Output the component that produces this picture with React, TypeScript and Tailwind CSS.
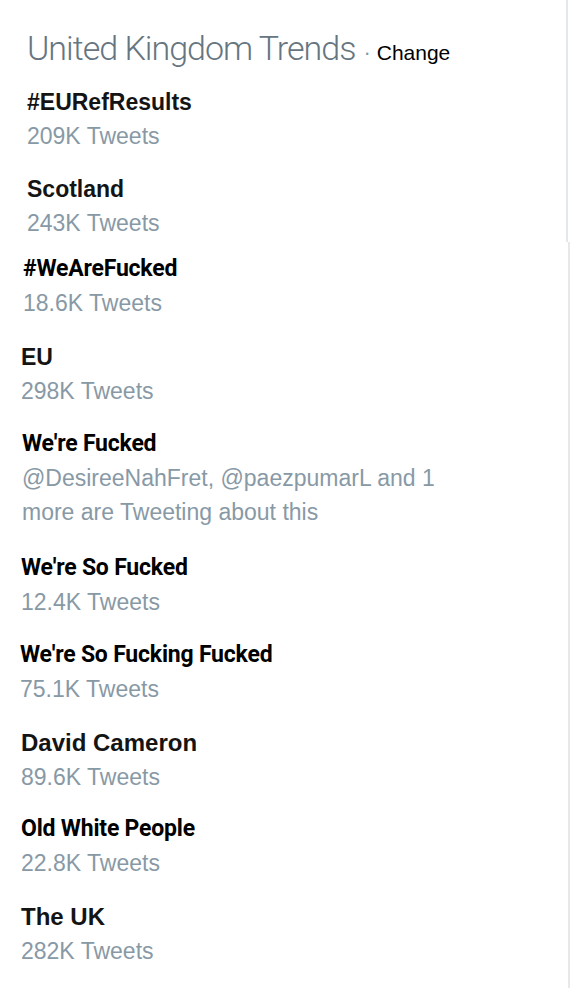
import React from 'react';

type Trend = {
  name: string;
  meta: string[];
  mt: number;
  pl: string;
  face: 'helv' | 'roboto';
  big?: boolean;
};

const helv = "font-['Liberation_Sans',Arial,sans-serif]";
const roboto = "font-['Roboto','Liberation_Sans',sans-serif]";

const topTrends: Trend[] = [
  { name: '#EURefResults', meta: ['209K Tweets'], mt: 16, pl: 'pl-[27px]', face: 'helv' },
  { name: 'Scotland', meta: ['243K Tweets'], mt: 19, pl: 'pl-[27px]', face: 'helv' },
];

const moreTrends: Trend[] = [
  { name: '#WeAreFucked', meta: ['18.6K Tweets'], mt: 0, pl: 'pl-[23px]', face: 'roboto' },
  { name: 'EU', meta: ['298K Tweets'], mt: 20, pl: 'pl-[21px]', face: 'helv' },
  {
    name: "We're Fucked",
    meta: ['@DesireeNahFret, @paezpumarL and 1', 'more are Tweeting about this'],
    mt: 19,
    pl: 'pl-[22px]',
    face: 'roboto',
  },
  { name: "We're So Fucked", meta: ['12.4K Tweets'], mt: 22, pl: 'pl-[21px]', face: 'roboto' },
  { name: "We're So Fucking Fucked", meta: ['75.1K Tweets'], mt: 19, pl: 'pl-[20px]', face: 'roboto' },
  { name: 'David Cameron', meta: ['89.6K Tweets'], mt: 20, pl: 'pl-[21px]', face: 'helv', big: true },
  { name: 'Old White People', meta: ['22.8K Tweets'], mt: 18, pl: 'pl-[21px]', face: 'roboto' },
  { name: 'The UK', meta: ['282K Tweets'], mt: 20, pl: 'pl-[21px]', face: 'helv', big: true },
];

const TrendItem = ({ trend }: { trend: Trend }) => (
  <div className={trend.pl} style={{ marginTop: trend.mt }}>
    <div
      className={
        trend.face === 'helv'
          ? `${helv} ${trend.big ? 'text-[24px]' : 'text-[23px]'} font-bold leading-[34px] text-[#141414]`
          : `${roboto} text-[23px] font-bold leading-[34px] text-black tracking-[-0.2px]`
      }
    >
      {trend.name}
    </div>
    {trend.meta.map((line) => (
      <div key={line} className={`${helv} text-[23px] leading-[34px] text-[#8899a6]`}>
        {line}
      </div>
    ))}
  </div>
);

export default function App() {
  return (
    <div className="min-h-[990px] w-[570px] bg-white">
      {/* top screenshot */}
      <div className="h-[242px] w-[568px] border-r-2 border-[#e4e8ee] pt-[28px]">
        <div className="flex items-baseline pl-[27px]">
          <span className={`${roboto} text-[34px] font-light leading-[40px] text-[#66757f] tracking-[-1px]`}>
            United Kingdom Trends
          </span>
          <span className={`${helv} ml-[8px] text-[22px] text-[#8899a6]`}>·</span>
          <span className={`${helv} ml-[6px] text-[21px] text-black`}>Change</span>
        </div>
        {topTrends.map((t) => (
          <TrendItem key={t.name} trend={t} />
        ))}
      </div>

      {/* stitched-on list below */}
      <div className="w-[570px] border-r-2 border-[#e8e8e8] pt-[10px] pb-[20px]">
        {moreTrends.map((t) => (
          <TrendItem key={t.name} trend={t} />
        ))}
      </div>
    </div>
  );
}
